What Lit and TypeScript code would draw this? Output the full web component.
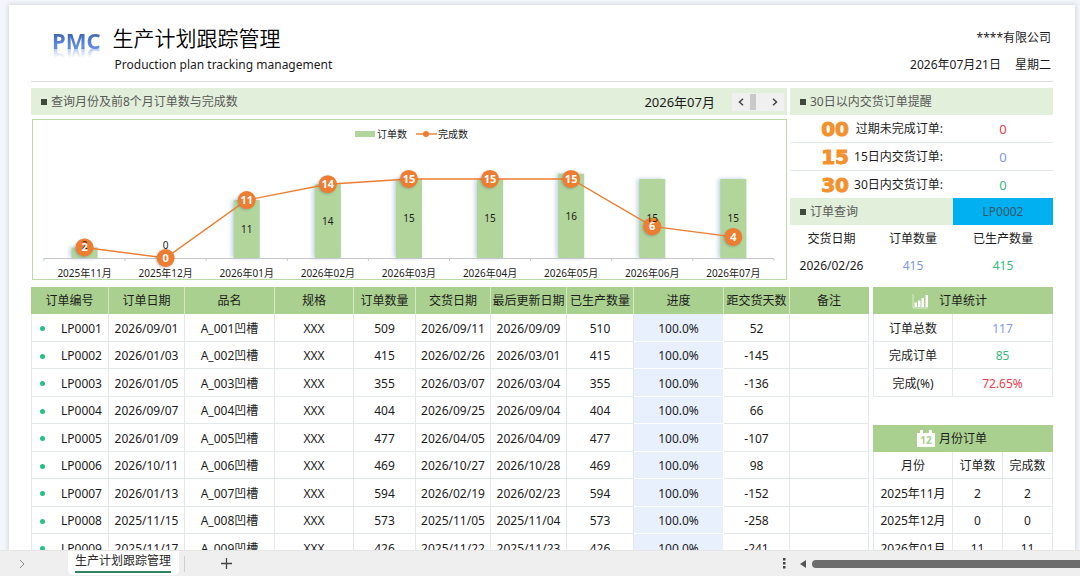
import { LitElement, html, svg, css } from "lit";
import { customElement, property, state } from "lit/decorators.js";

interface MonthPoint {
  month: string;
  orders: number;
  done: number;
}

const MONTHS: MonthPoint[] = [
  { month: "2025年11月", orders: 2, done: 2 },
  { month: "2025年12月", orders: 0, done: 0 },
  { month: "2026年01月", orders: 11, done: 11 },
  { month: "2026年02月", orders: 14, done: 14 },
  { month: "2026年03月", orders: 15, done: 15 },
  { month: "2026年04月", orders: 15, done: 15 },
  { month: "2026年05月", orders: 16, done: 15 },
  { month: "2026年06月", orders: 15, done: 6 },
  { month: "2026年07月", orders: 15, done: 4 },
];

const HEADS = ["订单编号", "订单日期", "品名", "规格", "订单数量", "交货日期", "最后更新日期", "已生产数量", "进度", "距交货天数", "备注"];

const ORDERS = [
  ["LP0001", "2026/09/01", "A_001凹槽", "XXX", "509", "2026/09/11", "2026/09/09", "510", "100.0%", "52", ""],
  ["LP0002", "2026/01/03", "A_002凹槽", "XXX", "415", "2026/02/26", "2026/03/01", "415", "100.0%", "-145", ""],
  ["LP0003", "2026/01/05", "A_003凹槽", "XXX", "355", "2026/03/07", "2026/03/04", "355", "100.0%", "-136", ""],
  ["LP0004", "2026/09/07", "A_004凹槽", "XXX", "404", "2026/09/25", "2026/09/04", "404", "100.0%", "66", ""],
  ["LP0005", "2026/01/09", "A_005凹槽", "XXX", "477", "2026/04/05", "2026/04/09", "477", "100.0%", "-107", ""],
  ["LP0006", "2026/10/11", "A_006凹槽", "XXX", "469", "2026/10/27", "2026/10/28", "469", "100.0%", "98", ""],
  ["LP0007", "2026/01/13", "A_007凹槽", "XXX", "594", "2026/02/19", "2026/02/23", "594", "100.0%", "-152", ""],
  ["LP0008", "2025/11/15", "A_008凹槽", "XXX", "573", "2025/11/05", "2025/11/04", "573", "100.0%", "-258", ""],
  ["LP0009", "2025/11/17", "A_009凹槽", "XXX", "426", "2025/11/22", "2025/11/23", "426", "100.0%", "-241", ""],
];

const base = css`
  * {
    box-sizing: border-box;
  }
  h1,
  h2,
  p {
    margin: 0;
    font-weight: 400;
  }
  button,
  input {
    font: inherit;
    color: inherit;
    border: 0;
    padding: 0;
    margin: 0;
    background: none;
    border-radius: 0;
  }
  table {
    width: 100%;
    border-collapse: separate;
    border-spacing: 0;
    table-layout: fixed;
  }
  th,
  td {
    padding: 0;
    font-weight: 400;
    text-align: center;
    line-height: 18px;
    white-space: nowrap;
  }
  .blue {
    color: #7c98e8;
  }
  .green {
    color: #35b97c;
  }
  .red {
    color: #e8404c;
  }
`;

@customElement("trend-chart")
class TrendChart extends LitElement {
  @property({ attribute: false }) points: MonthPoint[] = [];

  static styles = css`
    :host {
      display: block;
      border: 1px solid #b9dba6;
      background: #fff;
    }
    .plot {
      display: block;
      width: 100%;
      height: auto;
    }
    .bar {
      fill: #b1d59b;
      filter: drop-shadow(-2px 0 2px rgba(110, 150, 190, 0.45));
    }
    .axis {
      stroke: #c4c8cc;
      fill: none;
    }
    .line {
      stroke: #ed7d31;
      stroke-width: 1.4;
      fill: none;
    }
    .dot {
      fill: #ed7d31;
      filter: drop-shadow(-1px 1px 1px rgba(90, 90, 120, 0.35));
    }
    .small {
      fill: #ed7d31;
    }
    .label {
      font-size: 10px;
      fill: #1c1c1c;
      text-anchor: middle;
    }
    .legend {
      font-size: 10px;
      fill: #1c1c1c;
      text-anchor: start;
    }
    .value {
      font-size: 11px;
      font-weight: 700;
      fill: #fff;
      text-anchor: middle;
    }
  `;

  render() {
    const zero = 138;
    const unit = 5.27;
    const left = 11;
    const step = 81.1;
    const cx = (i: number) => left + step * (i + 0.5);
    const y = (v: number) => zero - v * unit;
    const pts = this.points;
    return html`
      <svg class="plot" viewBox="0 0 753 159" role="img" aria-label="订单数与完成数">
        <rect x="322" y="11" width="20" height="6" fill="#b1d59b" />
        <text class="legend" x="344" y="18">订单数</text>
        <path class="line" d="M383 14H404" />
        <circle class="small" cx="393" cy="14" r="3" />
        <text class="legend" x="405" y="18">完成数</text>
        ${pts.map((p, i) => svg`<rect class="bar" x=${cx(i) - 13} y=${y(p.orders)} width="26" height=${p.orders * unit} />`)}
        <path
          class="axis"
          d=${`M${left} ${zero + 0.5}H${left + step * pts.length}` +
          Array.from({ length: pts.length + 1 }, (_, i) => `M${left + step * i} ${zero}v3`).join("")}
        />
        <polyline class="line" points=${pts.map((p, i) => `${cx(i)},${y(p.done)}`).join(" ")} />
        ${pts.map((p, i) => svg`<circle class="dot" cx=${cx(i)} cy=${y(p.done)} r="9" />`)}
        ${pts.map((p, i) => svg`<text class="label" x=${cx(i)} y=${Math.min(y(p.orders / 2) + 4, zero - 9)}>${p.orders}</text>`)}
        ${pts.map((p, i) => svg`<text class="value" x=${cx(i)} y=${y(p.done) + 4}>${p.done}</text>`)}
        ${pts.map((p, i) => svg`<text class="label" x=${cx(i)} y="157">${p.month}</text>`)}
      </svg>
    `;
  }
}

@customElement("order-table")
class OrderTable extends LitElement {
  static styles = [
    base,
    css`
      :host {
        display: block;
      }
      .w1 { width: 78px; }
      .w2 { width: 76px; }
      .w3 { width: 90px; }
      .w4 { width: 79px; }
      .w5 { width: 62px; }
      .w6 { width: 75px; }
      .w7 { width: 76px; }
      .w8 { width: 67px; }
      .w9 { width: 90px; }
      .w10 { width: 66px; }
      .w11 { width: 79px; }
      th {
        height: 27px;
        background: #a9d08e;
        border-right: 1px solid #d3e8c5;
      }
      th:last-child {
        border-right-color: #a9d08e;
      }
      td {
        height: 27px;
        padding-top: 2px;
        border-right: 1px solid #e3e8ea;
        border-bottom: 1px solid #e3e8ea;
      }
      tr:nth-child(odd) td {
        height: 28px;
      }
      td:first-child {
        border-left: 1px solid #e3e8ea;
      }
      td.progress {
        background: #e8effd;
        border-color: #fff;
      }
      .code {
        display: flex;
        align-items: center;
        justify-content: space-between;
        padding: 0 6px 0 8px;
      }
      .bullet {
        width: 5px;
        height: 5px;
        border-radius: 50%;
        background: #24c185;
      }
    `,
  ];

  render() {
    return html`
      <table>
        <colgroup>
          ${HEADS.map((_, i) => html`<col class="w${i + 1}" />`)}
        </colgroup>
        <thead>
          <tr>
            ${HEADS.map((h) => html`<th scope="col">${h}</th>`)}
          </tr>
        </thead>
        <tbody>
          ${ORDERS.map(
            (row) => html`<tr>
              ${row.map((c, i) =>
                i === 0
                  ? html`<td><div class="code"><span class="bullet"></span><span>${c}</span></div></td>`
                  : html`<td class=${i === 8 ? "progress" : ""}>${c}</td>`
              )}
            </tr>`
          )}
        </tbody>
      </table>
    `;
  }
}

@customElement("side-tables")
class SideTables extends LitElement {
  static styles = [
    base,
    css`
      :host {
        display: flex;
        flex-direction: column;
        gap: 28px;
      }
      .label { width: 80px; }
      .wide { width: 100px; }
      .half { width: 50px; }
      .title {
        height: 27px;
        background: #a9d08e;
      }
      .heading {
        display: grid;
        grid-template-columns: 1fr auto 1fr;
        align-items: center;
      }
      .icon {
        justify-self: end;
        display: block;
        margin-right: 4px;
      }
      .icon.chart {
        margin-right: 10px;
      }
      .digits {
        font-size: 10px;
        font-weight: 700;
        fill: #a9d08e;
        text-anchor: middle;
      }
      tbody th,
      tbody td {
        height: 27px;
        padding-top: 2px;
        border-right: 1px solid #e3e8ea;
        border-bottom: 1px solid #e3e8ea;
      }
      tbody tr > :first-child {
        border-left: 1px solid #e3e8ea;
      }
      .stats tbody tr:nth-child(odd) > *,
      .months tbody tr:nth-child(even) > * {
        height: 28px;
      }
    `,
  ];

  render() {
    return html`
      <table class="stats">
        <colgroup><col class="label" /><col class="wide" /></colgroup>
        <thead>
          <tr>
            <th class="title" colspan="2">
              <div class="heading">
                <svg class="icon chart" width="17" height="16" viewBox="0 0 17 16" aria-hidden="true">
                  <path d="M1 1V15H16" stroke="#fff" stroke-opacity=".6" fill="none" />
                  <path d="M2.500 9.500h2.500V14H2.500zM6 7.500h2.500V14H6zM9.500 5h2.500V14H9.500zM13.500 2h2.500V14h-2.500z" fill="#fff" />
                </svg>
                <span>订单统计</span>
              </div>
            </th>
          </tr>
        </thead>
        <tbody>
          <tr><th scope="row">订单总数</th><td class="blue">117</td></tr>
          <tr><th scope="row">完成订单</th><td class="green">85</td></tr>
          <tr><th scope="row">完成(%)</th><td class="red">72.65%</td></tr>
        </tbody>
      </table>
      <table class="months">
        <colgroup><col class="label" /><col class="half" /><col class="half" /></colgroup>
        <thead>
          <tr>
            <th class="title" colspan="3">
              <div class="heading">
                <svg class="icon" width="18" height="18" viewBox="0 0 18 18" aria-hidden="true">
                  <path d="M0 3H3V1a1.500 1.500 0 0 1 3 0V3h6V1a1.500 1.500 0 0 1 3 0V3h3V17H0z" fill="#fff" />
                  <text class="digits" x="9" y="14">12</text>
                </svg>
                <span>月份订单</span>
              </div>
            </th>
          </tr>
        </thead>
        <tbody>
          <tr><th scope="col">月份</th><th scope="col">订单数</th><th scope="col">完成数</th></tr>
          ${MONTHS.slice(0, 3).map(
            (m) => html`<tr><td>${m.month}</td><td>${m.orders}</td><td>${m.done}</td></tr>`
          )}
        </tbody>
      </table>
    `;
  }
}

@customElement("app-root")
class AppRoot extends LitElement {
  @state() private code = "LP0002";

  static styles = [
    base,
    css`
      :host {
        display: flex;
        flex-direction: column;
        height: 100vh;
        overflow: hidden;
        background: #f3f6fa;
        color: #1c1c1c;
        font: 12px/18px "Noto Sans", "Noto Sans CJK SC", sans-serif;
      }
      .sheet {
        flex: 1;
        min-height: 0;
        overflow: hidden;
        margin: 5px 5px 0 9px;
        padding: 0 22px;
        background: #fff;
        box-shadow: 0 0 4px 1px #d2d7de;
      }
      .header {
        display: flex;
        justify-content: space-between;
        height: 77px;
        border-bottom: 1px solid #dcdfe1;
      }
      .brand {
        display: flex;
        gap: 12px;
        padding-left: 21px;
      }
      .logo {
        padding-top: 20px;
        font-size: 22px;
        line-height: 30px;
        font-weight: 700;
      }
      .logo-text {
        display: block;
        height: 24px;
        background: linear-gradient(#3b62ac 30%, #5f8ae0 85%);
        -webkit-background-clip: text;
        background-clip: text;
        color: transparent;
        -webkit-box-reflect: below -1px linear-gradient(transparent 60%, rgba(0, 0, 0, 0.5));
      }
      .name {
        padding-top: 17px;
      }
      .name h1 {
        font-size: 21px;
        line-height: 32px;
        font-weight: 350;
        color: #000;
      }
      .name p {
        padding: 2px 0 0 2px;
      }
      .meta {
        display: flex;
        flex-direction: column;
        gap: 9px;
        padding: 24px 2px 0 0;
        text-align: right;
      }
      .day {
        display: flex;
        justify-content: flex-end;
        gap: 14px;
      }
      .top {
        display: grid;
        grid-template-columns: 756fr 263fr;
        gap: 3px;
        margin-top: 6px;
      }
      .band {
        display: flex;
        align-items: center;
        height: 27px;
        padding-left: 10px;
        background: #e2efda;
        color: #595959;
      }
      .band h2 {
        flex: 1;
        display: flex;
        align-items: center;
        gap: 4px;
        font-size: 12px;
      }
      .square {
        width: 6px;
        height: 6px;
        background: #3f4a3a;
      }
      .month {
        margin-right: 17px;
        font-size: 13px;
        color: #1c1c1c;
      }
      .stepper {
        display: flex;
        justify-content: space-between;
        width: 52px;
        height: 18px;
        margin-right: 3px;
        background: #f0f0f0;
      }
      .stepper button {
        display: grid;
        place-items: center;
        width: 18px;
      }
      .thumb {
        width: 6px;
        margin: 1px 10px 1px 0;
        background: #c9c9c9;
      }
      .chart {
        margin: 4px 0 0 1px;
      }
      .alert {
        display: grid;
        grid-template-columns: 59px 1fr 100px;
        align-items: center;
        height: 28px;
        border-bottom: 1px solid #e3e8ea;
      }
      .alert:last-of-type {
        height: 27px;
        border-bottom: 0;
      }
      .days {
        font: 700 20px/20px "DejaVu Sans", sans-serif;
        color: #f5912d;
        -webkit-text-stroke: 1px #f5912d;
        text-align: right;
      }
      .what {
        padding-right: 10px;
        text-align: right;
      }
      .count {
        text-align: center;
        font-size: 13px;
      }
      .query {
        padding-right: 0;
      }
      .query input {
        width: 100px;
        height: 27px;
        background: #00b0f0;
        color: #33586b;
        text-align: center;
      }
      .c1 { width: 83px; }
      .c2 { width: 80px; }
      .c3 { width: 100px; }
      .lookup th,
      .lookup td {
        height: 27px;
        padding-top: 1px;
      }
      .bottom {
        display: grid;
        grid-template-columns: 838fr 180fr;
        gap: 4px;
        margin-top: 7px;
      }
      .bar {
        display: flex;
        flex: none;
        position: relative;
        height: 26px;
        background: #efefef;
        border-top: 1px solid #e6e6e6;
        align-items: flex-start;
      }
      .bar button {
        display: grid;
        place-items: center;
        height: 25px;
      }
      .nav {
        width: 44px;
      }
      .tab-wrap {
        margin-left: 24px;
        padding: 0 8px 0 7px;
        height: 24px;
        background: #fff;
        border-radius: 0 0 5px 5px;
      }
      .bar .tab {
        height: 22px;
        border-bottom: 2px solid #2f8560;
        color: #2a2a2a;
      }
      .rule {
        width: 1px;
        height: 16px;
        margin: 5px 0 0 5px;
        background: #d0d0d0;
      }
      .add {
        width: 83px;
      }
      .space {
        flex: 1;
      }
      .dots {
        width: 20px;
      }
      .back {
        width: 18px;
      }
      .scroll {
        width: 268px;
        height: 8px;
        margin-top: 9px;
        border-radius: 4px 0 0 4px;
        background: #6d6d6d;
      }
    `,
  ];

  private onCode(e: Event) {
    this.code = (e.target as HTMLInputElement).value;
  }

  private alert(days: string, text: string, count: number, tone: string) {
    return html`<div class="alert">
      <span class="days">${days}</span>
      <span class="what">${text}</span>
      <span class="count ${tone}">${count}</span>
    </div>`;
  }

  render() {
    return html`
      <main class="sheet">
        <header class="header">
          <div class="brand">
            <div class="logo"><span class="logo-text">PMC</span></div>
            <div class="name">
              <h1>生产计划跟踪管理</h1>
              <p>Production plan tracking management</p>
            </div>
          </div>
          <div class="meta">
            <span>****有限公司</span>
            <span class="day"><span>2026年07月21日</span><span>星期二</span></span>
          </div>
        </header>

        <div class="top">
          <section>
            <div class="band">
              <h2><span class="square"></span>查询月份及前8个月订单数与完成数</h2>
              <span class="month">2026年07月</span>
              <div class="stepper">
                <button aria-label="上个月">
                  <svg width="6" height="8" viewBox="0 0 6 8"><path d="M5 .8 1.500 4 5 7.200" fill="none" stroke="#444" stroke-width="1.500" /></svg>
                </button>
                <span class="thumb"></span>
                <button aria-label="下个月">
                  <svg width="6" height="8" viewBox="0 0 6 8"><path d="M1 .8 4.500 4 1 7.200" fill="none" stroke="#444" stroke-width="1.500" /></svg>
                </button>
              </div>
            </div>
            <trend-chart class="chart" .points=${MONTHS}></trend-chart>
          </section>

          <section>
            <div class="band"><h2><span class="square"></span>30日以内交货订单提醒</h2></div>
            <div>
              ${this.alert("00", "过期未完成订单:", 0, "red")} ${this.alert("15", "15日内交货订单:", 0, "blue")}
              ${this.alert("30", "30日内交货订单:", 0, "green")}
            </div>
            <div class="band query">
              <h2><span class="square"></span>订单查询</h2>
              <input aria-label="订单编号" .value=${this.code} @input=${this.onCode} />
            </div>
            <table class="lookup">
              <colgroup><col class="c1" /><col class="c2" /><col class="c3" /></colgroup>
              <thead>
                <tr><th scope="col">交货日期</th><th scope="col">订单数量</th><th scope="col">已生产数量</th></tr>
              </thead>
              <tbody>
                <tr><td>2026/02/26</td><td class="blue">415</td><td class="green">415</td></tr>
              </tbody>
            </table>
          </section>
        </div>

        <div class="bottom">
          <order-table></order-table>
          <side-tables></side-tables>
        </div>
      </main>

      <footer class="bar">
        <button class="nav" aria-label="下一个工作表">
          <svg width="6" height="10" viewBox="0 0 6 10"><path d="M1 1 5 5 1 9" fill="none" stroke="#8a8a8a" /></svg>
        </button>
        <div class="tab-wrap"><button class="tab">生产计划跟踪管理</button></div>
        <span class="rule"></span>
        <button class="add" aria-label="新建工作表">
          <svg width="11" height="11" viewBox="0 0 11 11"><path d="M5.500 0V11M0 5.500H11" stroke="#444" stroke-width="1.300" /></svg>
        </button>
        <span class="space"></span>
        <button class="dots" aria-label="更多">
          <svg width="3" height="11" viewBox="0 0 3 11"><path d="M0 0h2.500v2.500H0zM0 4h2.500v2.500H0zM0 8h2.500v2.500H0z" fill="#444" /></svg>
        </button>
        <button class="back" aria-label="向左滚动">
          <svg width="6" height="8" viewBox="0 0 6 8"><path d="M6 0V8L0 4z" fill="#555" /></svg>
        </button>
        <div class="scroll"></div>
      </footer>
    `;
  }
}
